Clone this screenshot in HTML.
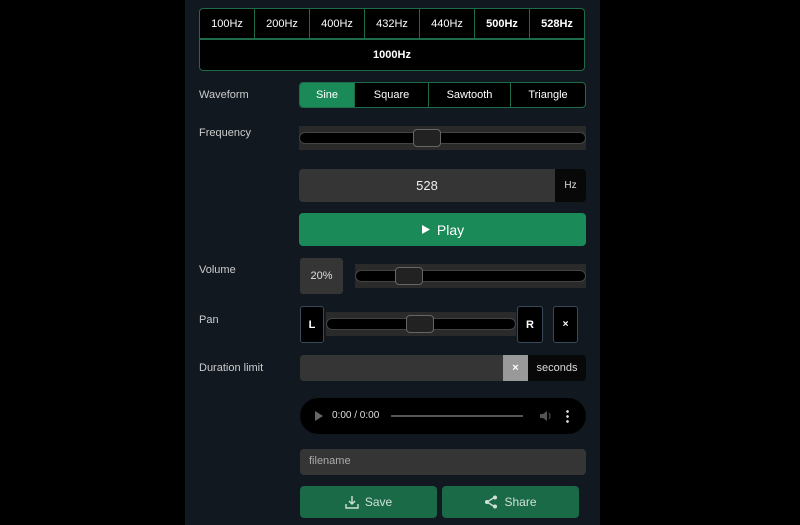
<!DOCTYPE html><html><head><style>
*{box-sizing:border-box;margin:0;padding:0}
body{width:800px;height:525px;background:#000;font-family:"Liberation Sans",sans-serif;color:#ddd;position:relative;overflow:hidden;font-size:11px}
.panel{position:absolute;left:185px;top:0;width:415px;height:525px;background:#111820}
.a{position:absolute}
.lbl{position:absolute;left:199px;color:#ccc;font-size:11px}
.presets{left:199px;top:8px;width:386px;height:31px;display:flex;border:1px solid #1d6b48;border-radius:4px 4px 0 0;background:#000;overflow:hidden}
.presets div{flex:1;border-right:1px solid #1d6b48;display:flex;align-items:center;justify-content:center;color:#fff;font-size:11px}
.presets div:last-child{border-right:0}
.k{left:199px;top:39px;width:386px;height:32px;border:1px solid #1d6b48;border-radius:0 0 4px 4px;background:#000;color:#fff;font-weight:bold;display:flex;align-items:center;justify-content:center}
.wave{left:299px;top:82px;width:287px;height:26px;border:1px solid #1d6b48;border-radius:4px;display:flex;background:#000;overflow:hidden}
.wave div{display:flex;align-items:center;justify-content:center;color:#fff;border-right:1px solid #1d6b48}
.wave div:last-child{border-right:0}
.sl{background:#2a2a2a}
.tr{position:absolute;left:0;right:0;top:50%;height:12px;margin-top:-6px;background:#000;border:1px solid #444;border-radius:6px}
.th{position:absolute;top:50%;height:18px;margin-top:-9px;width:28px;background:#222;border:1px solid #666;border-radius:4px}
.box{border:1px solid #3a4a5a;border-radius:3px;background:#000;color:#fff;font-weight:bold;display:flex;align-items:center;justify-content:center}
.btn{background:#1a6a48;border-radius:4px;color:#d0e0d8;display:flex;align-items:center;justify-content:center;font-size:12px;gap:6px}
</style></head><body>
<div class="panel"></div>
<div class="a presets"><div>100Hz</div><div>200Hz</div><div>400Hz</div><div>432Hz</div><div>440Hz</div><div style="font-weight:bold">500Hz</div><div style="font-weight:bold">528Hz</div></div>
<div class="a k">1000Hz</div>
<div class="lbl" style="top:89px">Waveform</div>
<div class="a wave"><div style="width:55px;background:#1a8a58">Sine</div><div style="width:74px">Square</div><div style="width:82px">Sawtooth</div><div style="flex:1">Triangle</div></div>
<div class="lbl" style="top:127px">Frequency</div>
<div class="a sl" style="left:299px;top:126px;width:287px;height:24px"><div class="tr"></div><div class="th" style="left:114px"></div></div>
<div class="a" style="left:299px;top:169px;width:256px;height:33px;background:#353535;border-radius:4px 0 0 4px;color:#eee;font-size:13px;display:flex;align-items:center;justify-content:center">528</div>
<div class="a" style="left:555px;top:169px;width:31px;height:33px;background:#080808;border-radius:0 4px 4px 0;color:#ddd;font-size:10px;display:flex;align-items:center;justify-content:center">Hz</div>
<div class="a btn" style="left:299px;top:213px;width:287px;height:33px;background:#1a8a58;color:#fff;font-size:14px"><svg width="10" height="11"><path d="M1 1L9 5.5L1 10Z" fill="#fff"/></svg>Play</div>
<div class="lbl" style="top:264px">Volume</div>
<div class="a" style="left:300px;top:258px;width:43px;height:36px;background:#353535;border-radius:3px;color:#ddd;display:flex;align-items:center;justify-content:center">20%</div>
<div class="a sl" style="left:355px;top:264px;width:231px;height:24px"><div class="tr"></div><div class="th" style="left:40px"></div></div>
<div class="lbl" style="top:314px">Pan</div>
<div class="a box" style="left:300px;top:306px;width:24px;height:37px">L</div>
<div class="a sl" style="left:326px;top:312px;width:190px;height:24px"><div class="tr"></div><div class="th" style="left:80px"></div></div>
<div class="a box" style="left:517px;top:306px;width:26px;height:37px">R</div>
<div class="a box" style="left:553px;top:306px;width:25px;height:37px;font-size:10px">×</div>
<div class="lbl" style="top:362px">Duration limit</div>
<div class="a" style="left:300px;top:355px;width:203px;height:26px;background:#353535;border-radius:4px 0 0 4px"></div>
<div class="a" style="left:503px;top:355px;width:25px;height:26px;background:#999;color:#fff;font-weight:bold;display:flex;align-items:center;justify-content:center">×</div>
<div class="a" style="left:528px;top:355px;width:58px;height:26px;background:#080808;border-radius:0 4px 4px 0;color:#ddd;display:flex;align-items:center;justify-content:center">seconds</div>
<div class="a" style="left:300px;top:398px;width:286px;height:36px;background:#000;border-radius:18px">
<svg class="a" style="left:14px;top:12px" width="10" height="12"><path d="M1 1L9 6L1 11Z" fill="#666"/></svg>
<div class="a" style="left:32px;top:12px;color:#ddd;font-size:10px">0:00 / 0:00</div>
<div class="a" style="left:91px;top:17px;width:132px;height:2px;background:#555"></div>
<svg class="a" style="left:239px;top:11px" width="14" height="14"><path d="M1 5H4L8 2V12L4 9H1Z" fill="#555"/><path d="M10 4Q12 7 10 10" stroke="#555" fill="none"/></svg>
<div class="a" style="left:266px;top:11px;width:3px;height:14px;background:radial-gradient(circle,#ddd 1.2px,transparent 1.5px) 0 0/3px 5px"></div>
</div>
<div class="a" style="left:300px;top:449px;width:286px;height:26px;background:#353535;border-radius:4px;color:#aaa;font-size:11px;padding:6px 9px">filename</div>
<div class="a btn" style="left:300px;top:486px;width:137px;height:32px"><svg width="14" height="14" fill="none" stroke="#d0e0d8" stroke-width="1.4"><path d="M7 1V9M4 6L7 9L10 6M1 9V13H13V9"/></svg>Save</div>
<div class="a btn" style="left:442px;top:486px;width:137px;height:32px"><svg width="14" height="14"><path d="M11 2L3 7L11 12" stroke="#d0e0d8" stroke-width="1.4" fill="none"/><circle cx="11" cy="2.5" r="2" fill="#d0e0d8"/><circle cx="3" cy="7" r="2" fill="#d0e0d8"/><circle cx="11" cy="11.5" r="2" fill="#d0e0d8"/></svg>Share</div>
</body></html>
